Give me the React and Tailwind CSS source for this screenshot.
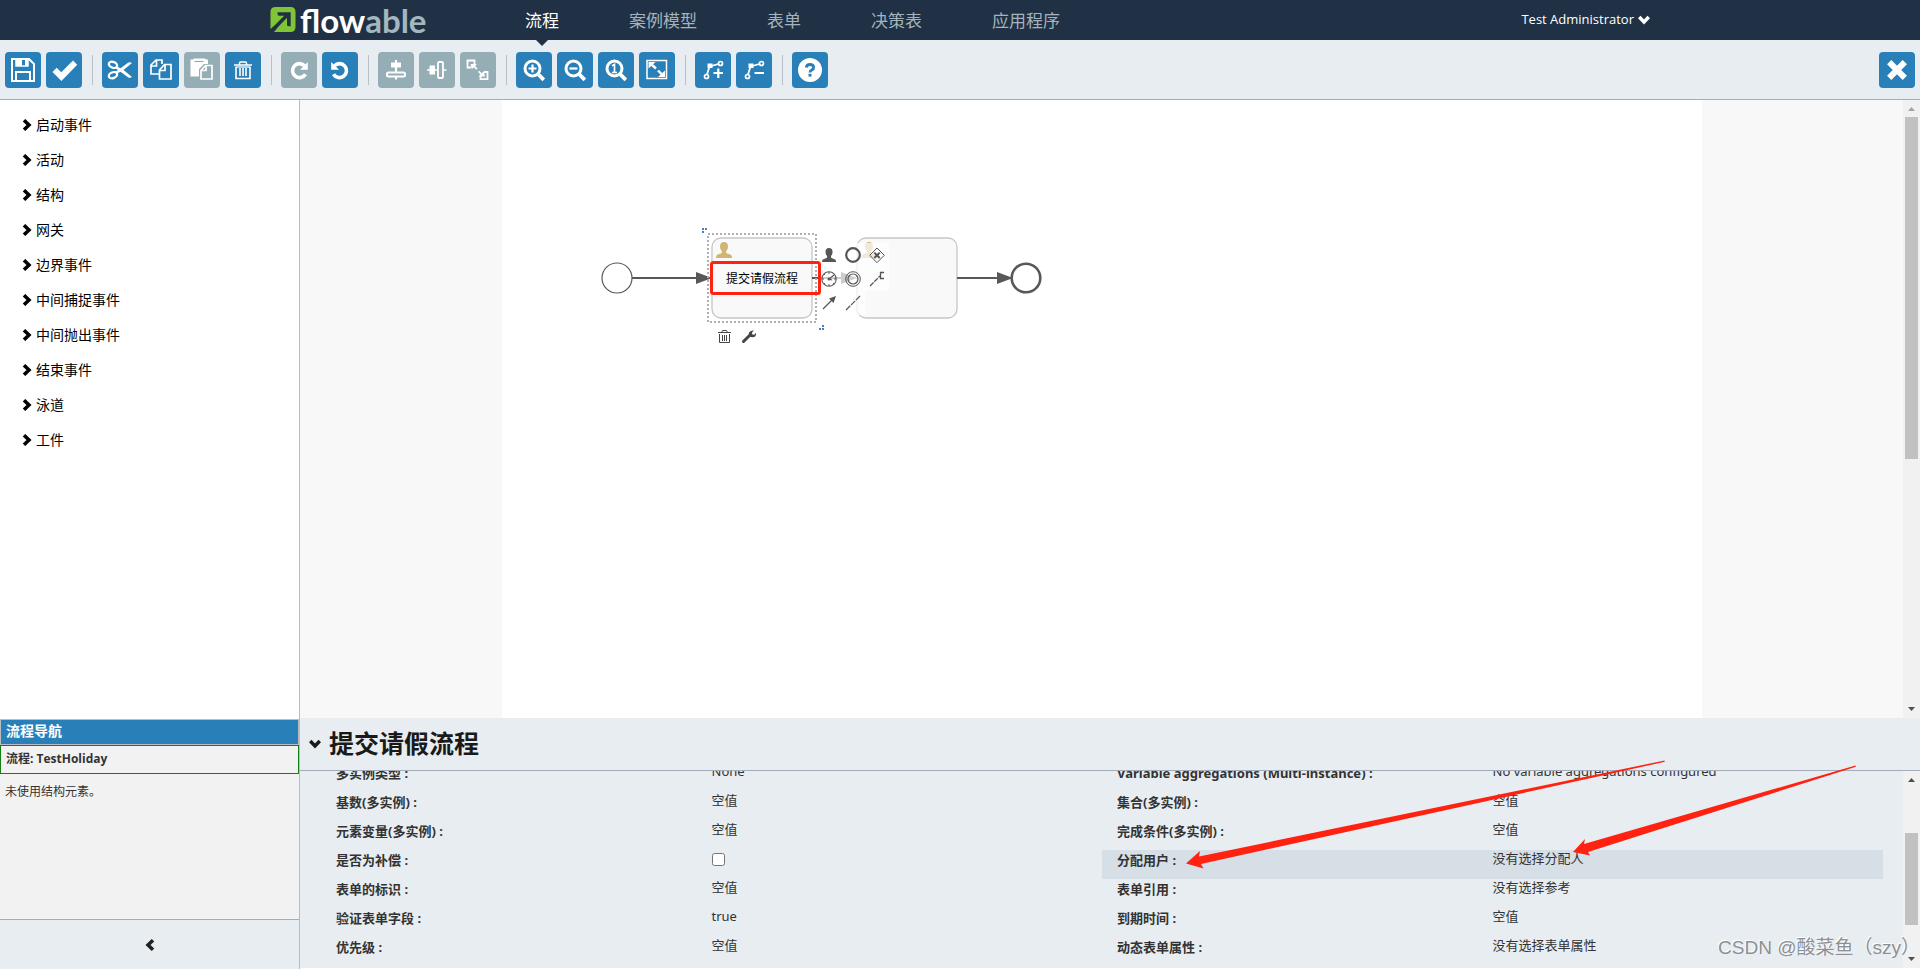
import { useState } from 'react'
import clsx from 'clsx'

const TOOLBAR = [
  [
    { id: 'save', label: '保存' },
    { id: 'validate', label: '验证' },
  ],
  [
    { id: 'cut', label: '剪切' },
    { id: 'copy', label: '复制' },
    { id: 'paste', label: '粘贴', disabled: true },
    { id: 'trash', label: '删除' },
  ],
  [
    { id: 'redo', label: '重做', disabled: true },
    { id: 'undo', label: '撤销' },
  ],
  [
    { id: 'alignV', label: '垂直对齐', disabled: true },
    { id: 'alignH', label: '水平对齐', disabled: true },
    { id: 'sameSize', label: '相同大小', disabled: true },
  ],
  [
    { id: 'zoomIn', label: '放大' },
    { id: 'zoomOut', label: '缩小' },
    { id: 'zoomActual', label: '实际大小' },
    { id: 'zoomFit', label: '适合屏幕' },
  ],
  [
    { id: 'bendAdd', label: '添加拐点' },
    { id: 'bendRemove', label: '删除拐点' },
  ],
  [{ id: 'help', label: '帮助' }],
]

const NAV = ['流程', '案例模型', '表单', '决策表', '应用程序']

const STENCILS = [
  '启动事件',
  '活动',
  '结构',
  '网关',
  '边界事件',
  '中间捕捉事件',
  '中间抛出事件',
  '结束事件',
  '泳道',
  '工件',
]

const LEFT_PROPS = [
  { name: '多实例类型', value: 'None' },
  { name: '基数(多实例)', value: '空值' },
  { name: '元素变量(多实例)', value: '空值' },
  { name: '是否为补偿', checkbox: true },
  { name: '表单的标识', value: '空值' },
  { name: '验证表单字段', value: 'true' },
  { name: '优先级', value: '空值' },
]

const RIGHT_PROPS = [
  { name: 'Variable aggregations (Multi-instance)', value: 'No variable aggregations configured' },
  { name: '集合(多实例)', value: '空值' },
  { name: '完成条件(多实例)', value: '空值' },
  { name: '分配用户', value: '没有选择分配人' },
  { name: '表单引用', value: '没有选择参考' },
  { name: '到期时间', value: '空值' },
  { name: '动态表单属性', value: '没有选择表单属性' },
]

const LENS = (
  <>
    <circle cx="16.500" cy="16.500" r="7.500" strokeWidth="3" />
    <path d="M22 22l5.800 5.800" strokeWidth="3.800" />
  </>
)

const BEND = (
  <>
    <circle cx="11.500" cy="24.500" r="2" strokeWidth="1.700" />
    <circle cx="25.500" cy="11.500" r="2" strokeWidth="1.700" />
    <path d="M12 22.500l2.500-8L23.500 12" strokeWidth="1.800" />
    <path d="M12.500 11.500h5V16h-5z" fill="#fff" stroke="none" />
  </>
)

// All toolbar glyphs share a 36x36 box, the size of the button
const GLYPHS = {
  save: (
    <>
      <path d="M7 7h17l5 5v17H7z" strokeWidth="2" />
      <path d="M11 7v7h12V7" strokeWidth="1.500" />
      <path d="M11 7h6v7h-6zM20 7h3v7h-3z" fill="#fff" stroke="none" />
      <path d="M11 29V20h14v9" strokeWidth="2" />
    </>
  ),
  validate: <path d="M6.500 20l4.200-4.200 4.600 4.400L27 8.600l4.200 4.200L15.400 29z" fill="#fff" stroke="none" />,
  cut: (
    <>
      <ellipse cx="11" cy="12.800" rx="4.300" ry="2.900" transform="rotate(22 11 12.800)" strokeWidth="2.300" />
      <ellipse cx="11" cy="23.200" rx="4.300" ry="2.900" transform="rotate(-22 11 23.200)" strokeWidth="2.300" />
      <path d="M14 14l4.500 2.300L26 10.700q2-1.200 4 .3L21.500 18l8.500 7q-2 1.500-4 .3l-7.500-5.600L14 22l-1-2 3-2-3-2z" fill="#fff" stroke="none" />
    </>
  ),
  copy: (
    <>
      <path d="M17 22H8v-9l5-5h6v4M8 14h5.500V8" strokeWidth="1.700" />
      <path d="M21.500 12.500H28V27H16.500v-9zM16.500 18.500h5.500v-6" strokeWidth="1.700" />
    </>
  ),
  paste: (
    <>
      <path d="M6.500 7.500h3v-1h12v1h2.500V12h-4l-5 5v7.500H6.500z" fill="#fff" stroke="none" />
      <path d="M10.500 9.500h9" stroke="#95adb4" strokeWidth="1.200" />
      <path d="M21.500 13.500H28V27H17v-8.500zM17 18.500h5v-5" strokeWidth="1.700" />
    </>
  ),
  trash: (
    <>
      <path d="M9 13h18M14.500 12.500v-1.200q0-1.300 1.300-1.300h4.400q1.300 0 1.300 1.300v1.200" strokeWidth="1.500" />
      <path d="M11 15v11.500h14V15M15 16v8M18 16v8M21 16v8" strokeWidth="1.600" />
      <path d="M10.500 15h15" strokeWidth="1.300" />
    </>
  ),
  redo: (
    <>
      <path d="M24.500 22.300a7 7 0 1 1-1-8.600" strokeWidth="3.600" />
      <path d="M26.800 10v7.800H19z" fill="#fff" stroke="none" />
    </>
  ),
  undo: (
    <>
      <path d="M11.500 22.300a7 7 0 1 0 1-8.600" strokeWidth="3.600" />
      <path d="M9.200 10v7.800H17z" fill="#fff" stroke="none" />
    </>
  ),
  alignV: (
    <>
      <path d="M18 8v19.500" strokeWidth="2.200" />
      <rect x="13" y="10.500" width="10" height="5" fill="#fff" stroke="none" />
      <rect x="9" y="20.500" width="18" height="4" rx="1.500" strokeWidth="2" fill="#95adb4" />
    </>
  ),
  alignH: (
    <>
      <path d="M8 18h19.500" strokeWidth="1.500" />
      <rect x="10.500" y="13.500" width="5.500" height="9" fill="#fff" stroke="none" />
      <rect x="19" y="10" width="5" height="16" rx="1" strokeWidth="1.800" fill="#95adb4" />
    </>
  ),
  sameSize: (
    <>
      <path d="M11 15.500H7.500V8.500h7v4M24 20h3.500v7.200h-7V24" strokeWidth="1.800" />
      <path d="M10.500 12h6.500l-2 2 2.500 2.500-1.200 1.200-2.500-2.500-2 2zM25 24.500h-6.500l2-2-2.500-2.500 1.200-1.200 2.500 2.500 2-2z" fill="#fff" stroke="none" />
    </>
  ),
  zoomIn: (
    <>
      {LENS}
      <path d="M12.500 16.500h8M16.500 12.500v8" strokeWidth="2.200" />
    </>
  ),
  zoomOut: (
    <>
      {LENS}
      <path d="M12.500 16.500h8" strokeWidth="2.200" />
    </>
  ),
  zoomActual: (
    <>
      {LENS}
      <path d="M14 13.800l2.500-1.300v8M14 20.500h5" strokeWidth="1.700" />
    </>
  ),
  zoomFit: (
    <>
      <rect x="8" y="8.500" width="19.500" height="18" strokeWidth="1.500" />
      <path d="M12 12l5 4.500M19 18.500l5 5" strokeWidth="2.400" />
      <path d="M9.500 10h7l-7 6.500zM26 25h-7l7-6.500z" fill="#fff" stroke="none" />
    </>
  ),
  bendAdd: (
    <>
      {BEND}
      <path d="M18.500 21h9.500M23.300 16.500v9.500" strokeWidth="2.200" />
    </>
  ),
  bendRemove: (
    <>
      {BEND}
      <path d="M18.500 21h9.500" strokeWidth="2" />
    </>
  ),
  help: (
    <>
      <circle cx="18" cy="18" r="12" fill="#fff" stroke="none" />
      <path d="M14.300 15.500q.3-3 3.700-3t3.700 2.800q0 1.700-1.900 2.700-1.800.9-1.800 2.500" stroke="#2980b9" strokeWidth="2.800" />
      <rect x="16.500" y="21.800" width="3" height="2.800" fill="#2980b9" stroke="none" />
    </>
  ),
  close: <path d="M10.200 10.200l15.600 15.600M25.800 10.200L10.200 25.800" strokeWidth="6" />,
}

function ToolButton({ id, label, disabled }) {
  return (
    <button
      type="button"
      aria-label={label}
      disabled={disabled}
      className={clsx('w-9 h-9 rounded shrink-0', disabled ? 'bg-[#95adb4]' : 'bg-[#2980b9]')}
    >
      <svg viewBox="0 0 36 36" fill="none" stroke="#fff" className="w-9 h-9">
        {GLYPHS[id]}
      </svg>
    </button>
  )
}

function Chevron({ className }) {
  return (
    <svg viewBox="0 0 12 12" className={clsx('w-3 h-3 shrink-0', className)} fill="none" stroke="currentColor" strokeWidth="3.500">
      <path d="M3 1.200L8 6l-5 4.800" />
    </svg>
  )
}

function Logo() {
  return (
    <a href="#/processes" className="flex items-center gap-1 w-[220px] h-10" aria-label="flowable">
      <svg viewBox="0 0 26 26" className="w-[26px] h-[26px] shrink-0">
        <path d="M5.500 0h15Q25.500 0 25.500 5v15q0 5-5 5H4l5-6 8-8.300V18q0 1.200 2 1.200h1.700V5.200H7.500V7q0 1.800 1.500 1.800h5.200L5.500 17.500.5 22V5q0-5 5-5z" fill="#80c535" />
      </svg>
      <span className="font-['Lato'] font-bold text-[33px] leading-10 text-white">
        flow<span className="text-[#a3b7be]">able</span>
      </span>
    </a>
  )
}

function Header() {
  return (
    <header className="h-10 bg-[#203145] shrink-0">
      <div className="max-w-[1380px] h-10 mx-auto flex items-center">
        <Logo />
        <nav className="flex flex-1">
          {NAV.map((item, i) => (
            <a
              key={item}
              href="#/"
              className={clsx(
                'relative h-10 px-[35px] text-[17px] leading-[42px] whitespace-nowrap',
                i === 0 ? 'text-white' : 'text-[#a3b4bc]'
              )}
            >
              {item}
              {i === 0 && (
                <span className="absolute z-10 left-1/2 top-10 -translate-x-1/2 border-x-6 border-t-6 border-x-transparent border-t-[#203145]" />
              )}
            </a>
          ))}
        </nav>
        <button type="button" className="flex items-center gap-1 text-white text-[13px] whitespace-nowrap">
          Test Administrator
          <Chevron className="rotate-90" />
        </button>
      </div>
    </header>
  )
}

function Toolbar() {
  return (
    <div className="h-[60px] shrink-0 flex items-center px-[5px] bg-[#e8edf1] border-b border-[#a4acb9]">
      {TOOLBAR.map((group, i) => (
        <div key={group[0].id} className="flex items-center">
          {i > 0 && <div className="w-px h-[30px] ml-[10px] mr-[9px] bg-[#b8c0c8]" />}
          <div className="flex gap-[5px]">
            {group.map((tool) => (
              <ToolButton key={tool.id} {...tool} />
            ))}
          </div>
        </div>
      ))}
      <div className="ml-auto flex">
        <ToolButton id="close" label="关闭" />
      </div>
    </div>
  )
}

function Sidebar() {
  return (
    <aside className="w-[300px] shrink-0 flex flex-col border-r border-[#b9bcc2]">
      <ul className="flex-1 pt-[7px] pl-[21px]">
        {STENCILS.map((name) => (
          <li key={name} className="h-[35px] flex items-center">
            <button type="button" className="flex items-center gap-[3px] text-sm text-black">
              <Chevron />
              {name}
            </button>
          </li>
        ))}
      </ul>
      <div className="h-[200px] shrink-0 flex flex-col bg-[#f2f2f2]">
        <h3 className="h-[26px] pl-[5px] border border-[#b9bcc2] bg-[#2980b9] text-white text-sm leading-[22px] font-bold">流程导航</h3>
        <div className="h-[29px] pl-[5px] border border-[#138013] text-xs leading-[26px] font-bold text-[#333]">流程: TestHoliday</div>
        <p className="pl-[5px] pt-2 text-xs leading-5 text-[#333]">未使用结构元素。</p>
      </div>
      <button
        type="button"
        aria-label="收起"
        className="h-[50px] shrink-0 flex items-center justify-center border-t border-[#a4acb9] bg-[#e8edf1] text-[#222]"
      >
        <Chevron className="rotate-180" />
      </button>
    </aside>
  )
}

function Scrollbar({ thumb, offset, topMuted }) {
  return (
    <div className="w-[17px] shrink-0 flex flex-col items-center bg-[#f1f1f1]">
      <svg viewBox="0 0 17 17" className="w-[17px] h-[17px] shrink-0">
        <path d="M5 11h7L8.500 7z" fill={topMuted ? '#a3a3a3' : '#505050'} />
      </svg>
      <div className="flex-1 w-[13px]">
        <div className="bg-[#c1c1c1]" style={{ height: thumb, marginTop: offset }} />
      </div>
      <svg viewBox="0 0 17 17" className="w-[17px] h-[17px] shrink-0">
        <path d="M5 6h7l-3.500 4z" fill="#505050" />
      </svg>
    </div>
  )
}

const PERSON = 'M8 0c2.700 0 4 1.800 4 4.200 0 2-.7 3.700-1.700 4.800-.4 2 .2 2.400 2.500 3.100 2.300.7 3.200 1.300 3.200 3.900H0c0-2.600.9-3.200 3.200-3.900 2.300-.7 2.900-1.100 2.500-3.100C4.700 7.900 4 6.200 4 4.200 4 1.800 5.300 0 8 0z'

function Flow({ x1, x2 }) {
  return (
    <g>
      <path d={`M${x1} 178H${x2 - 14}`} stroke="#585858" strokeWidth="2" />
      <path d={`M${x2 - 16} 172l16 6-16 6z`} fill="#585858" />
    </g>
  )
}

function Task({ x }) {
  return (
    <g>
      <rect x={x} y="138" width="100" height="80" rx="9" fill="#f9f9f9" stroke="#c6c6c6" strokeWidth="1.300" />
      <path transform={`translate(${x + 4} 142)`} d={PERSON} fill="#d1b575" />
    </g>
  )
}

// Quick-add icons that float to the right of the selected task
function QuickMenu() {
  return (
    <g stroke="#555" fill="none">
      <path d="M318 143h69v48h-24v24h-45z" fill="#fff" fillOpacity=".7" stroke="none" />
      <path transform="translate(320 148) scale(.88)" d={PERSON} fill="#555" stroke="none" />
      <circle cx="351" cy="155" r="6.800" strokeWidth="2.200" />
      <path d="M375 148l7.300 7.300-7.300 7.300-7.300-7.300z" strokeWidth="1" />
      <path d="M372.300 152.600l5.400 5.400M377.700 152.600l-5.400 5.400" strokeWidth="2" />
      <circle cx="327" cy="179" r="7.200" strokeWidth="1.100" />
      <path d="M327 172v2M327 184v2M320 179h2M332 179h2M322 174l1 1M332 184l-1-1M322 184l1-1" strokeWidth="1" />
      <path d="M332 175l-5 4 3 1" strokeWidth="1.100" />
      <circle cx="327" cy="179" r="1.500" fill="#555" stroke="none" />
      <circle cx="351" cy="179" r="7.300" strokeWidth="1" />
      <circle cx="351" cy="179" r="5" strokeWidth="1.200" />
      <path d="M368 186l10-10" strokeWidth="1.200" strokeDasharray="5 1" />
      <path d="M382 172.500h-3.500v6h3.500" strokeWidth="1.300" />
      <path d="M321 209l9-9" strokeWidth="1.300" />
      <path d="M334 196l-2.500 7-4.500-4.500z" fill="#555" stroke="none" />
      <path d="M344 210l14-14" strokeWidth="1.200" strokeDasharray="6 1" />
    </g>
  )
}

function Diagram() {
  return (
    <svg viewBox="0 0 1200 618" className="w-[1200px] h-[618px]">
      <circle cx="115" cy="178" r="15" fill="#fff" stroke="#585858" strokeWidth="1.200" />
      <Task x={210} />
      <Task x={355} />
      <Flow x1={130} x2={210} />
      <Flow x1={310} x2={355} />
      <Flow x1={455} x2={511} />
      <circle cx="524" cy="178" r="14.300" fill="#fff" stroke="#585858" strokeWidth="2.600" />

      <rect x="206" y="134" width="108" height="88" fill="none" stroke="#b0b0b0" strokeWidth="2" strokeDasharray="2 2" />
      <path d="M200 128h2v2h-2zM203 128h2v2h-2zM200 131h2v2h-2zM320 225h2v2h-2zM317 228h2v2h-2zM320 228h2v2h-2z" fill="#4b7fc0" />
      <QuickMenu />

      <g stroke="#444" fill="none">
        <path d="M216 232.500h13M220 232.500v-1q0-1 1-1h3q1 0 1 1v1M217.500 234v8.500h10V234M220.500 235v6M222.500 235v6M224.500 235v6" strokeWidth="1" />
        <path d="M241.500 241.500l6-6" strokeWidth="3" strokeLinecap="round" />
        <path d="M252 230.500l-2 2 .3 2 2 .2 1.700-2q.5 4.500-3.500 4.500-3.500-.2-3.800-3 .2-3.800 5.300-3.700z" fill="#444" stroke="none" />
      </g>

      <text x="260" y="183" textAnchor="middle" fontSize="12" fill="#000">
        提交请假流程
      </text>
      <rect x="209.500" y="162.500" width="108" height="31" rx="2" fill="none" stroke="#ff2211" strokeWidth="3" />
    </svg>
  )
}

function PropertyColumn({ items, selected, onSelect }) {
  return (
    <dl className="flex-1">
      {items.map((item) => (
        <div
          key={item.name}
          onClick={() => onSelect(item.name)}
          className={clsx('h-[29px] flex text-[13px] text-[#333]', selected === item.name && 'bg-[#d6dee6]')}
        >
          <dt className="w-1/2 pl-[15px] leading-5 font-bold">
            {item.checkbox ? <label htmlFor="compensation">{item.name} :</label> : `${item.name} :`}
          </dt>
          <dd className="w-1/2 leading-4">
            {item.checkbox ? <input id="compensation" type="checkbox" className="block w-[13px] h-[13px] mt-[3px]" /> : item.value}
          </dd>
        </div>
      ))}
    </dl>
  )
}

function PropertyPanel() {
  const [selected, setSelected] = useState('分配用户')

  return (
    <section className="relative h-[251px] shrink-0 flex flex-col bg-[#e8edf1] border-b border-white">
      <h2 className="h-[53px] shrink-0 flex items-center gap-2 pl-[9px] border-b border-[#a4acb9] text-[25px] font-bold text-[#1a1a1a]">
        <Chevron className="rotate-90" />
        提交请假流程
      </h2>
      <div className="flex-1 min-h-0 flex">
        <div className="flex-1 flex flex-col justify-end overflow-hidden pl-[21px] pr-5 pb-0.5 font-['Noto_Sans','Noto_Sans_CJK_SC',sans-serif]">
          <div className="flex">
            <PropertyColumn items={LEFT_PROPS} selected={selected} onSelect={setSelected} />
            <PropertyColumn items={RIGHT_PROPS} selected={selected} onSelect={setSelected} />
          </div>
        </div>
        <Scrollbar thumb={92} offset={45} />
      </div>

      <svg viewBox="0 0 800 251" className="absolute right-0 top-0 w-[800px] h-[251px] pointer-events-none" fill="#ff2211">
        <path d="M66 145.500L80 133l-1 5.500L544.500 42.500l.3 1.300L81 146l2.500 4.500z" />
        <path d="M453 134l12-13-1 5L735.500 47.500l.4 1.300L468 134l2 3.500z" />
      </svg>
      <span className="absolute right-0 bottom-1.5 font-['Liberation_Sans','Noto_Sans_CJK_SC',sans-serif] text-[19px] leading-7 text-[#8d9093] [text-shadow:-1px_-1px_0_#fff] whitespace-nowrap">
        CSDN @酸菜鱼（szy）
      </span>
    </section>
  )
}

export default function App() {
  return (
    <div className="h-screen flex flex-col overflow-hidden bg-white font-['Open_Sans','Noto_Sans_CJK_SC',sans-serif]">
      <Header />
      <Toolbar />
      <div className="flex-1 min-h-0 flex">
        <Sidebar />
        <main className="flex-1 min-w-0 flex flex-col">
          <div className="flex-1 min-h-0 flex">
            <div className="flex-1 min-w-0 overflow-hidden bg-[#f8f8f8]">
              <div className="w-[1200px] h-full mx-auto bg-white">
                <Diagram />
              </div>
            </div>
            <Scrollbar thumb={342} offset={0} topMuted />
          </div>
          <PropertyPanel />
        </main>
      </div>
    </div>
  )
}
